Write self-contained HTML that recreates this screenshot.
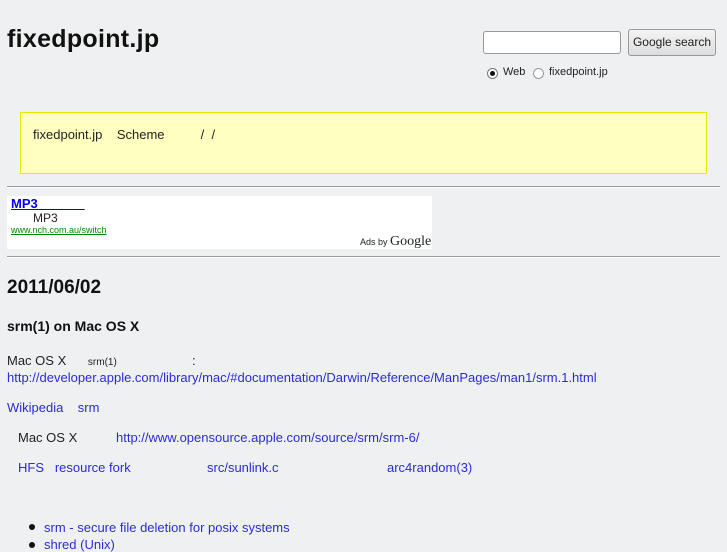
<!DOCTYPE html>
<html><head><meta charset="utf-8"><style>
body{margin:0;width:727px;height:545px;overflow:hidden;background:#eff0f1;font-family:"Liberation Sans",sans-serif;font-size:13px;color:#222;position:relative}
.a{position:absolute;white-space:nowrap}
.l{color:#2b2bd8}
hr{position:absolute;left:7px;width:713px;margin:0;border:0;border-top:1px solid #999;border-bottom:1px solid #fff;height:0}
</style></head><body>
<div class="a" style="left:7px;top:25px;font-size:25px;font-weight:bold;color:#111;letter-spacing:0.3px">fixedpoint.jp</div>
<div class="a" style="left:483px;top:31px;width:136px;height:21px;background:#fff;border:1px solid #999;border-radius:3px"></div>
<div class="a" style="left:628px;top:29px;width:86px;height:25px;background:linear-gradient(#f4f4f4,#ddd);border:1px solid #999;border-radius:3px;font-size:12px;line-height:25px;text-align:center;color:#222">Google search</div>
<div class="a" style="left:487px;top:68px;width:9px;height:9px;border:1px solid #777;border-radius:50%;background:#fff"></div>
<div class="a" style="left:490px;top:71px;width:5px;height:5px;border-radius:50%;background:#111"></div>
<div class="a" style="left:503px;top:66px;font-size:11px">Web</div>
<div class="a" style="left:533px;top:68px;width:9px;height:9px;border:1px solid #999;border-radius:50%;background:#fff"></div>
<div class="a" style="left:549px;top:66px;font-size:11px">fixedpoint.jp</div>
<div class="a" style="left:20px;top:112px;width:685px;height:60px;background:#ffffc0;border:1px solid #e8e800"></div>
<div class="a" style="left:33px;top:127px">fixedpoint.jp&nbsp;&nbsp;&nbsp;&nbsp;Scheme&nbsp;&nbsp;&nbsp;&nbsp;&nbsp;&nbsp;&nbsp;&nbsp;&nbsp;&nbsp;/&nbsp;&nbsp;/</div>
<hr style="top:186px">
<div class="a" style="left:7px;top:196px;width:425px;height:53px;background:#fff"></div>
<div class="a" style="left:11px;top:196px;font-weight:bold;color:#00e;text-decoration:underline">MP3&nbsp;&nbsp;&nbsp;&nbsp;&nbsp;&nbsp;&nbsp;&nbsp;&nbsp;&nbsp;&nbsp;&nbsp;&nbsp;</div>
<div class="a" style="left:33px;top:211px;font-size:12px">MP3</div>
<div class="a" style="left:11px;top:225px;font-size:9px;color:#080;text-decoration:underline">www.nch.com.au/switch</div>
<div class="a" style="left:360px;top:234px;font-size:9px;color:#222">Ads by <span style="font-family:'Liberation Serif',serif;font-size:14px">Google</span></div>
<hr style="top:256px">
<div class="a" style="left:7px;top:277px;font-size:19px;font-weight:bold;color:#111">2011/06/02</div>
<div class="a" style="left:7px;top:318px;font-size:14px;font-weight:bold;color:#111">srm(1) on Mac OS X</div>
<div class="a" style="left:7px;top:353px">Mac OS X&nbsp;&nbsp;&nbsp;&nbsp;&nbsp;&nbsp;<span style="font-size:10px">srm(1)</span></div>
<div class="a" style="left:192px;top:353px">:</div>
<div class="a l" style="left:7px;top:370px">http://developer.apple.com/library/mac/#documentation/Darwin/Reference/ManPages/man1/srm.1.html</div>
<div class="a l" style="left:7px;top:400px">Wikipedia&nbsp;&nbsp;&nbsp;&nbsp;srm</div>
<div class="a" style="left:18px;top:430px">Mac OS X</div>
<div class="a l" style="left:116px;top:430px">http://www.opensource.apple.com/source/srm/srm-6/</div>
<div class="a l" style="left:18px;top:460px">HFS&nbsp;&nbsp;&nbsp;resource fork</div>
<div class="a l" style="left:207px;top:460px">src/sunlink.c</div>
<div class="a l" style="left:387px;top:460px">arc4random(3)</div>
<div class="a" style="left:29px;top:524px;width:6px;height:6px;border-radius:50%;background:#111"></div>
<div class="a l" style="left:44px;top:520px">srm - secure file deletion for posix systems</div>
<div class="a" style="left:29px;top:542px;width:6px;height:6px;border-radius:50%;background:#111"></div>
<div class="a l" style="left:44px;top:537px">shred (Unix)</div>
</body></html>
